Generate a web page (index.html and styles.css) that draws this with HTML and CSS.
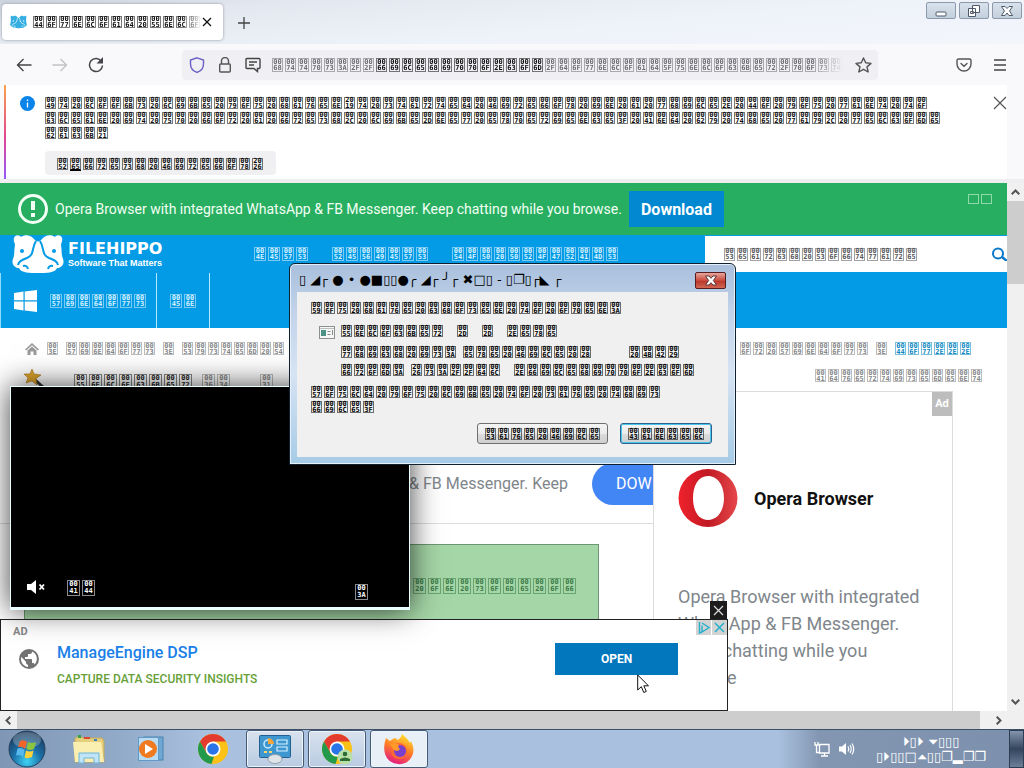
FILE: index.html
```html
<!DOCTYPE html>
<html lang="en">
<head>
<meta charset="utf-8">
<title>Download Unlocker</title>
<link rel="stylesheet" href="styles.css">
</head>
<body>
<svg width="0" height="0" class="defs" aria-hidden="true">
  <defs>
    <linearGradient id="flame" x1="0.7" y1="0" x2="0.3" y2="1"><stop offset="0" stop-color="#ffe22e"/><stop offset=".5" stop-color="#ff7a28"/><stop offset="1" stop-color="#e31587"/></linearGradient>
    <linearGradient id="operaRing" x1="0" y1="0" x2="1" y2="0"><stop offset="0" stop-color="#f0222c"/><stop offset=".5" stop-color="#c11a24"/><stop offset="1" stop-color="#e5484a"/></linearGradient>
    <radialGradient id="orb" cx=".5" cy=".85" r=".8"><stop offset="0" stop-color="#3fd3f5"/><stop offset=".5" stop-color="#1a6fa8"/><stop offset="1" stop-color="#1b3b5c"/></radialGradient>
    <symbol id="hippo" viewBox="0 0 52 38">
      <path fill="currentColor" d="M2 3C3-1 8 0 9 2C13-1 19 0 22 4C24 7 28 7 30 4C33 0 39-1 43 2C44 0 49-1 50 3C51 6 49 8 49 10C50 15 49 19 51 24C53 29 49 33 45 33C43 38 34 38 26 38C18 38 9 38 7 33C3 33-1 29 1 24C3 19 2 15 3 10C3 8 1 6 2 3Z"/>
      <path fill="none" stroke="var(--cut)" stroke-width="2" d="M24 6C19 14 23 19 15 23C10 25 7 26 6 30M28 6C33 14 29 19 37 23C42 25 45 26 46 30"/>
      <path fill="var(--cut)" d="M23 0H29L26 7Z"/>
      <circle cx="10" cy="16" r="2" fill="var(--cut)"/><circle cx="42" cy="16" r="2" fill="var(--cut)"/>
      <path fill="none" stroke="var(--cut)" stroke-width="2" d="M11 31Q15 30 16 34M41 31Q37 30 36 34"/>
    </symbol>
    <symbol id="chrome" viewBox="0 0 32 32">
      <circle cx="16" cy="16" r="15" fill="#fbc116"/>
      <path fill="#e33b2e" d="M3 8.500A15 15 0 0 1 29 8.500H16L9.500 20Z"/>
      <path fill="#229a4b" d="M3 8.500L9.500 20A7.500 7.500 0 0 0 17 23.500L14.500 31A15 15 0 0 1 3 8.500Z"/>
      <circle cx="16" cy="16" r="7.500" fill="#fff"/><circle cx="16" cy="16" r="5.800" fill="#2874e8"/>
    </symbol>
  </defs>
</svg>

<header class="tabstrip">
  <div class="tab">
    <svg class="fav" width="17" height="14"><use href="#hippo"/></svg>
    <span class="hex tab-title">Download Unlo</span>
    <button class="bare" aria-label="Close tab"><svg width="10" height="10" viewBox="0 0 10 10"><path d="M1 1L9 9M9 1L1 9" stroke="#111" stroke-width="1.300"/></svg></button>
  </div>
  <button class="bare newtab" aria-label="New tab"><svg width="12" height="12" viewBox="0 0 12 12"><path d="M6 0V12M0 6H12" stroke="#444" stroke-width="1.300"/></svg></button>
  <div class="winbtns">
    <button aria-label="Minimize"><svg width="14" height="12" viewBox="0 0 14 12"><rect x="2" y="7" width="10" height="4" rx="1" fill="#fff" stroke="#4e5a69"/></svg></button>
    <button aria-label="Restore"><svg width="14" height="12" viewBox="0 0 14 12"><path fill="#fff" stroke="#4e5a69" d="M5.500 .5H12.500V7.500H5.500ZM1.500 3.500H8.500V11.500H1.500ZM3.500 6.500H6.500V8.500H3.500Z"/></svg></button>
    <button aria-label="Close"><svg width="14" height="12" viewBox="0 0 14 12"><path fill="#fff" stroke="#4e5a69" d="M1.500 1.500H5L7 3.500L9 1.500H12.500L9.500 6L12.500 10.500H9L7 8L5 10.500H1.500L4.500 6Z"/></svg></button>
  </div>
</header>

<nav class="toolbar" aria-label="Navigation">
  <button class="bare" aria-label="Back"><svg width="16" height="16" viewBox="0 0 16 16"><path fill="none" stroke="#454549" stroke-width="1.400" d="M15.500 8H1.500M7.500 2L1.500 8L7.500 14"/></svg></button>
  <button class="bare" aria-label="Forward"><svg width="16" height="16" viewBox="0 0 16 16"><path fill="none" stroke="#c2c2c6" stroke-width="1.400" d="M.5 8H14.500M8.500 2L14.500 8L8.500 14"/></svg></button>
  <button class="bare" aria-label="Reload"><svg width="16" height="16" viewBox="0 0 16 16"><path fill="none" stroke="#454549" stroke-width="1.500" d="M13.500 4.500A6.500 6.500 0 1 0 14.500 8.500"/><path fill="#454549" d="M15 0V6.500H8.500Z"/></svg></button>
  <div class="urlbar">
    <svg width="16" height="16" viewBox="0 0 16 16"><path fill="none" stroke="#6a5fc4" stroke-width="1.400" d="M8 .8L14.500 3V7C14.500 11 12 14 8 15.400C4 14 1.500 11 1.500 7V3Z"/></svg>
    <svg width="16" height="16" viewBox="0 0 16 16"><path fill="none" stroke="#555" stroke-width="1.400" d="M4.500 7V4A3.500 3.500 0 0 1 11.500 4V7M3.700 7H12.300Q13.300 7 13.300 8V14Q13.300 15 12.300 15H3.700Q2.700 15 2.700 14V8Q2.700 7 3.700 7Z"/></svg>
    <svg width="16" height="16" viewBox="0 0 16 16"><path fill="none" stroke="#444" stroke-width="1.400" d="M2 1.500H14Q15 1.500 15 2.500V10.500Q15 11.500 14 11.500H12.500V14.500L9 11.500H2Q1 11.500 1 10.500V2.500Q1 1.500 2 1.500ZM4 5H12M4 8H9"/></svg>
    <div class="stack url">
      <div class="url-text"><span class="hex tall dim">https://</span><span class="hex tall">filehippo.com</span><span class="hex tall dim">/download_unlocker/post</span></div>
      <input type="text" aria-label="Address">
    </div>
    <button class="bare" aria-label="Bookmark"><svg width="17" height="16" viewBox="0 0 17 16"><path fill="none" stroke="#555" stroke-width="1.400" stroke-linejoin="round" d="M8.500 1L10.700 5.800L16 6.400L12 9.900L13.200 15L8.500 12.300L3.800 15L5 9.900L1 6.400L6.300 5.800Z"/></svg></button>
  </div>
  <button class="bare pocket" aria-label="Save to Pocket"><svg width="16" height="14" viewBox="0 0 16 14"><path fill="none" stroke="#555" stroke-width="1.400" stroke-linecap="round" d="M2.500 1H13.500Q15 1 15 2.500V6A7 7 0 0 1 1 6V2.500Q1 1 2.500 1ZM5 5.500L8 8.300L11 5.500"/></svg></button>
  <button class="bare" aria-label="Menu"><svg width="12" height="12" viewBox="0 0 12 12"><path stroke="#444" stroke-width="1.300" d="M0 1H12M0 6H12M0 11H12"/></svg></button>
</nav>

<section class="infobar">
  <svg width="15" height="15" viewBox="0 0 15 15"><circle cx="7.500" cy="7.500" r="7.500" fill="#0a84e8"/><path stroke="#fff" stroke-width="1.300" d="M7.500 6.500V11.500M7.500 3.500V5"/></svg>
  <div class="info-body">
    <p class="hex">It looks like you haven’t started Firefox in a while. Do you want to clean it up for a fresh, like-new experience? And by the way, welcome back!</p>
    <button class="refresh"><span class="hex" data-key="1">Refresh Firefox…</span></button>
  </div>
  <button class="bare" aria-label="Dismiss"><svg width="14" height="14" viewBox="0 0 14 14"><path d="M1 1L13 13M13 1L1 13" stroke="#555" stroke-width="1.200"/></svg></button>
</section>

<main class="viewport">
  <div class="page">
    <div class="alert">
      <svg width="30" height="30" viewBox="0 0 30 30"><circle cx="15" cy="15" r="13.500" fill="none" stroke="#f2fff4" stroke-width="3"/><path stroke="#f2fff4" stroke-width="4" d="M15 7V16M15 19V23"/></svg>
      <span>Opera Browser with integrated WhatsApp &amp; FB Messenger. Keep chatting while you browse.</span>
      <button class="download">Download</button>
      <span class="blank"><i></i><i></i></span>
    </div>

    <div class="masthead">
      <a class="logo" href="#"><svg width="52" height="38"><use href="#hippo"/></svg><span><b>FILEHIPPO</b><small>Software That Matters</small></span></a>
      <a href="#" class="hex tall wide">NEWS</a><a href="#" class="hex tall wide">REVIEWS</a><a href="#" class="hex tall wide">TOP PROGRAMS</a>
      <div class="search">
        <div class="stack"><span class="hex mid dim">Search Software</span><input type="text" aria-label="Search Software"></div>
        <button class="bare" aria-label="Search"><svg width="16" height="14" viewBox="0 0 16 14"><circle cx="7" cy="6.500" r="5" fill="none" stroke="#0878c9" stroke-width="2"/><path stroke="#0878c9" stroke-width="2.500" d="M11 10L16 14"/></svg></button>
      </div>
    </div>
    <div class="platform">
      <a href="#"><svg width="23" height="22" viewBox="0 0 23 22"><path fill="#fff" d="M0 3L9.500 1.600V10.300H0ZM10.700 1.400L23 0V10.300H10.700ZM0 11.500H9.500V20.400L0 19ZM10.700 11.500H23V22L10.700 20.500Z"/></svg><span class="hex tall wide">Windows</span></a>
      <a href="#"><span class="hex tall wide">En</span></a>
    </div>

    <nav class="crumbs" aria-label="Breadcrumb">
      <svg width="14" height="12" viewBox="0 0 14 12"><path fill="#999" d="M7 0L14 6.500L12.800 7.600L7 2.300L1.200 7.600L0 6.500ZM2.500 7.500L7 3.500L11.500 7.500V12H8.500V8.500H5.500V12H2.500Z"/></svg>
      <span class="hex mid">&gt;</span><a href="#" class="hex mid">Windows</a><span class="hex mid">&gt;</span><a href="#" class="hex mid">System T</a>
      <a href="#" class="hex mid push">or Windows</a><span class="hex mid">&gt;</span><span class="hex mid here">Dow...</span>
    </nav>

    <div class="columns">
      <div class="main">
        <h1><svg width="22" height="20" viewBox="0 0 22 20"><path stroke="#333" stroke-width="3" d="M9 9L20 19"/><path fill="#e0a52b" stroke="#a87416" stroke-width=".6" d="M8 0L10 5L17 6L12 9.500L13 16L8 12L2 14L4 9L0 5L6 5Z"/></svg><span class="hex big">Unlocker</span><span class="hex big light">64</span><span class="hex big light">1</span><span class="hex big light">9</span></h1>
        <div class="promo"><p>Opera Browser with integrated WhatsApp &amp; FB Messenger. Keep</p><button>DOW</button></div>
        <div class="notice"><span class="hex big"> on some of</span></div>
      </div>
      <aside class="side">
        <p class="hex mid">Advertisement</p>
        <div class="ad">
          <span class="adtag">Ad</span>
          <h2><svg width="60" height="60" viewBox="0 0 60 60"><path fill="url(#operaRing)" fill-rule="evenodd" d="M30 1A29.500 29 0 1 1 30 59A29.500 29 0 1 1 30 1ZM30 8C20 8 15 18 15 30C15 42 20 52 30 52C40 52 46 42 46 30C46 18 40 8 30 8Z"/></svg>Opera Browser</h2>
          <p>Opera Browser with integrated WhatsApp &amp; FB Messenger. Keep chatting while you browse</p>
        </div>
      </aside>
    </div>

    <div class="banner">
      <svg class="globe" width="20" height="20" viewBox="0 0 20 20"><circle cx="10" cy="10" r="10" fill="#737373"/><path fill="#fff" d="M9 18C5 17.500 2 14 2 10C2 9 2.200 8.500 2.400 8L7 12.800V13.800C7 15 8 15.800 9 15.800ZM15.800 15.400C15.500 14.600 14.800 14 14 14H13V11C13 10.400 12.500 10 12 10H6V8H8C8.500 8 9 7.600 9 7V5H11C12 5 13 4 13 3V2.600C18 4.500 19.500 11 15.800 15.400Z"/></svg>
      <div class="banner-text"><small>AD</small><a href="#" class="brand">ManageEngine DSP</a><a href="#" class="tag">CAPTURE DATA SECURITY INSIGHTS</a></div>
      <button class="open">OPEN</button>
      <div class="choices">
        <button aria-label="AdChoices"><svg width="13" height="13" viewBox="0 0 13 13"><path fill="none" stroke="#24b0cc" stroke-width="1.400" d="M5 2L12 6.500L5 11V4.500M2.500 1V12L5 11"/></svg></button>
        <button aria-label="Hide ad"><svg width="11" height="11" viewBox="0 0 11 11"><path stroke="#24b0cc" stroke-width="1.500" d="M1 1L10 10M10 1L1 10"/></svg></button>
      </div>
      <button class="closead" aria-label="Close ad"><svg width="11" height="11" viewBox="0 0 11 11"><path stroke="#ddd" stroke-width="1.200" d="M1 1L10 10M10 1L1 10"/></svg></button>
    </div>

    <div class="video">
      <svg width="20" height="16" viewBox="0 0 20 16"><path fill="#fff" d="M1 5H5L10 1V15L5 11H1Z"/><path stroke="#fff" stroke-width="1.800" d="M13.500 5.500L18 10.500M18 5.500L13.500 10.500"/></svg>
      <span class="hex big">AD</span><span class="hex big time">:</span>
    </div>
  </div>
  <div class="vbar"><svg width="9" height="6" viewBox="0 0 9 6"><path fill="none" stroke="#555" stroke-width="2" d="M.7 5.300L4.500 1.500L8.300 5.300"/></svg><i></i><svg width="9" height="6" viewBox="0 0 9 6"><path fill="none" stroke="#555" stroke-width="2" d="M.7 .7L4.500 4.500L8.300 .7"/></svg></div>
  <div class="hbar"><svg width="6" height="9" viewBox="0 0 6 9"><path fill="none" stroke="#555" stroke-width="2" d="M5.300 .7L1.500 4.500L5.300 8.300"/></svg><i></i><svg width="6" height="9" viewBox="0 0 6 9"><path fill="none" stroke="#555" stroke-width="2" d="M.7 .7L4.500 4.500L.7 8.300"/></svg></div>
</main>

<footer class="taskbar">
  <button class="orb" aria-label="Start"><svg width="38" height="38" viewBox="0 0 38 38"><circle cx="19" cy="19" r="18" fill="url(#orb)" stroke="#26425f"/><ellipse cx="19" cy="10" rx="14" ry="8" fill="#fff" opacity=".25"/><path fill="#f1652a" d="M12 11Q16 9 19 12L17 19Q14 16 10 17Z"/><path fill="#8cc63e" d="M20 12Q24 14 28 12L26 19Q22 21 18.500 19Z"/><path fill="#58b9ee" d="M9.500 18.500Q13 17 16.500 20L15 27Q12 24 8 25.500Z"/><path fill="#fcd13b" d="M18 20.500Q22 22.500 25.500 20.500L24 27Q20 29 16.500 27.500Z"/></svg></button>
  <button class="app" aria-label="Explorer"><svg width="34" height="32" viewBox="0 0 34 32"><path fill="#e6cf7c" stroke="#c0a95a" d="M3 5L8 3L11 5H30L32 8V29H3Z"/><path fill="#faefb0" d="M1 9H29L32 29H3Z"/><path fill="#35a34a" d="M6 2H9V5H6Z"/><path fill="#d9482f" d="M12 4H18V6H12Z"/><path fill="#3c82c9" d="M22 6H25V8H22Z"/><path fill="#bfe4f6" stroke="#6fb4da" d="M7 20H27V30H22V25H12V30H7Z"/></svg></button>
  <button class="app" aria-label="Media Player"><svg width="28" height="28" viewBox="0 0 28 28"><rect x="7" y="2" width="19" height="23" fill="#6fa8d4" stroke="#4d83b0"/><rect x="1.500" y="2.500" width="20" height="23" fill="#b9dcf2" stroke="#5f9ac8"/><circle cx="11" cy="14" r="9" fill="#f07a1f"/><path fill="#fff" d="M8 9L16 14L8 19Z"/></svg></button>
  <button class="app" aria-label="Chrome"><svg width="32" height="32"><use href="#chrome"/></svg></button>
  <button class="app running" aria-label="Control Panel"><svg width="32" height="30" viewBox="0 0 32 30"><rect x=".5" y="1.500" width="31" height="22" rx="1" fill="#3f97d0" stroke="#24608f"/><circle cx="9" cy="10" r="4" fill="none" stroke="#c8ecff" stroke-width="1.500"/><path fill="#f5a53a" d="M9 10V4A6 6 0 0 1 15 10Z"/><path fill="none" stroke="#d7f1ff" stroke-width="1.200" d="M18 6H28V10H18ZM18 13H28V17H18Z"/><path stroke="#ffd76a" stroke-width="2" d="M5 18H8M10 18H13"/><ellipse cx="16" cy="25" rx="7" ry="4.500" fill="#dfe4e8" stroke="#93a0ac"/></svg></button>
  <button class="app running" aria-label="Chrome profile"><svg width="32" height="32" viewBox="0 0 32 32"><use href="#chrome"/><circle cx="24" cy="24" r="7.500" fill="#b8dfa8"/><circle cx="24" cy="21" r="2.300" fill="#2c6b35"/><path fill="#2c6b35" d="M19 28V26Q24 23 29 26V28Z"/></svg></button>
  <button class="app running" aria-label="Firefox"><svg width="32" height="32" viewBox="0 0 32 32"><path fill="url(#flame)" d="M3 5L7 8Q10 5 13 5L14 7Q18 6 19 1Q25 6 27 10L28 8Q33 18 28 25Q23 32 15 31Q5 30 2 21Q0 13 3 5Z"/><circle cx="16" cy="18" r="8" fill="#ff6a32"/><circle cx="17" cy="18" r="6" fill="#7b3fd0"/><path fill="#ff9a2b" d="M7 11Q12 9 16 12Q14 14 17 16Q14 20 10 16Z"/></svg></button>
  <div class="tray">
    <svg width="16" height="15" viewBox="0 0 16 15"><path fill="none" stroke="#fff" stroke-width="1.300" d="M5.500 2.500H15V11H5.500ZM7 14H14M10.500 11V14M1 0V3H4V0M2.500 3V10.500H5"/></svg>
    <svg width="16" height="14" viewBox="0 0 16 14"><path fill="#fff" d="M0 4.500H3L7 1V13L3 9.500H0Z"/><path fill="none" stroke="#fff" stroke-width="1.200" d="M9 4.500Q10.500 7 9 9.500M11 3Q13.500 7 11 11M13 1.500Q16.500 7 13 12.500"/></svg>
    <div class="clock"><span>⏵▯⏵ ⏷▯▯▯</span><span>▯⏵▯▯□⏶▯▯❐▂❐❐</span></div>
    <button class="peek" aria-label="Show desktop"></button>
  </div>
</footer>

<section class="dialog" role="dialog" aria-label="Opening file">
  <div class="dlg-title"><span>▯ ◢┌ ● • ●■▯▯●╭ ◢┌ ╯┌ ✖□▯ - ▯❐▯┌◣ ┌</span><button aria-label="Close dialog"><svg width="14" height="11" viewBox="0 0 14 11"><path fill="#fff" stroke="#5d3a3c" d="M1.500 1H5L7 3.300L9 1H12.500L9.300 5.500L12.500 10H9L7 7.700L5 10H1.500L4.700 5.500Z"/></svg></button></div>
  <div class="dlg-body">
    <p class="hex">You have chosen to open:</p>
    <div class="details">
      <svg width="16" height="13" viewBox="0 0 16 13"><rect x=".5" y=".5" width="15" height="12" fill="#f6f6f6" stroke="#8b9091"/><path stroke="#b9bebf" d="M1 2.500H15"/><rect x="2" y="4" width="5" height="6" fill="#4c9186"/><path stroke="#888" d="M8.500 5.500H11.500M8.500 8.500H11.500M13.500 4V9"/></svg>
      <div class="line gaps"><span class="hex">Unlocker</span><span class="hex">-</span><span class="hex">-</span><span class="hex">.exe</span></div>
      <div class="line type"><span class="hex">which is:</span><span class="hex">exe File (</span><span class="hex size"> KB)</span></div>
      <div class="line from"><span class="hex">from:</span><span class="hex">…s://dl</span><span class="hex host">.filehippo.com</span></div>
    </div>
    <p class="hex">Would you like to save this file?</p>
    <div class="actions"><button><span class="hex">Save File</span></button><button class="default"><span class="hex">Cancel</span></button></div>
  </div>
</section>

<svg class="cursor" width="13" height="20" viewBox="0 0 13 20"><path fill="#fff" stroke="#111" d="M.7 1V16L4.300 12.700L6.800 18.500L9.300 17.400L6.800 11.800H11.500Z"/></svg>
<script src="glyphs.js"></script>
</body>
</html>
```
FILE: styles.css
```css
* { box-sizing: border-box; }
body { margin: 0; height: 100vh; display: flex; flex-direction: column; overflow: hidden; position: relative; font-family: Roboto, sans-serif; background: #f9f9fb; }
p, h1, h2 { margin: 0; }
svg { flex: none; display: block; }
a { text-decoration: none; color: inherit; }
button { font-family: inherit; cursor: pointer; }
.defs { position: absolute; }
.bare { border: 0; background: none; padding: 0; display: flex; align-items: center; justify-content: center; }

/* Missing-glyph boxes: each character is shown as its code point */
.hex { --w: 11px; --h: 12px; --f: 7px; --l: 6px; display: inline-flex; flex-wrap: wrap; row-gap: 3px; font-size: 6px; color: #0c0c0d; }
.hex.mid { --h: 13px; }
.hex.tall { --h: 14px; }
.hex.wide { --w: 12px; }
.hex.big { --w: 13px; --h: 16px; --l: 7px; }
p.hex { display: flex; }
.hex .word { display: flex; }
.hex .box { width: var(--w); height: var(--h); margin-right: 2px; border: 1px solid color-mix(in srgb, currentColor 55%, transparent); font: bold var(--f)/var(--l) "DejaVu Sans Mono", monospace; white-space: pre; display: flex; align-items: center; justify-content: center; }
.hex .key { border-bottom-color: #000; box-shadow: 0 1px #000; }
.hex .eol { visibility: hidden; }
.hex.dim { color: #6d6d73; }

.stack { display: grid; align-items: center; min-width: 0; }
.stack > * { grid-area: 1 / 1; }
.stack input { width: 100%; border: 0; background: transparent; outline: 0; }

.tabstrip { height: 44px; flex: none; display: flex; align-items: flex-start; padding: 2px; background: linear-gradient(175deg, #cbd3dd 0, #e3e8f0 20%, #eef2f9 60%, #f3f6fb 100%); }
.tab { width: 221px; height: 36px; margin-top: 2px; padding: 0 11px 0 8px; display: flex; align-items: center; background: #fff; border-radius: 4px; box-shadow: 0 0 3px #8d929c; }
.fav { color: #35aee2; --cut: #fff; margin-right: 6px; }
.tab-title { flex: 1; flex-wrap: nowrap; overflow: hidden; mask-image: linear-gradient(90deg, #000 88%, transparent); }
.newtab { margin: 15px; }
.winbtns { margin-left: auto; display: flex; gap: 3px; }
.winbtns button { width: 30px; height: 17px; padding: 0; display: flex; align-items: center; justify-content: center; border: 1px solid #8c9aac; border-radius: 2px; background: linear-gradient(#d9e2ec, #c3cfdc); }

.toolbar { height: 41px; flex: none; display: flex; align-items: center; padding: 0 6px; }
.toolbar > .bare { width: 36px; height: 32px; }
.urlbar { flex: 1; min-width: 0; height: 30px; margin: 0 68px; padding: 0 6px 0 7px; display: flex; align-items: center; gap: 12px; background: #f0f0f4; border-radius: 4px; }
.url { flex: 1; margin-left: -1px; overflow: hidden; mask-image: linear-gradient(90deg, #000 95%, transparent); }
.url-text { display: flex; width: 0; }
.url-text .hex { flex: none; flex-wrap: nowrap; }

.infobar { flex: none; display: flex; align-items: flex-start; margin: 0 17px 0 4px; padding: 11px 0 4px 14px; background: #fff; border-left: 2px solid; border-image: linear-gradient(#f9a54b, #e3458f 55%, #9059ff) 1; }
.infobar + .viewport { border-top: 4px solid #eeeef1; }
.info-body { flex: 1; margin: 1px 0 0 10px; }
.info-body p { max-width: 940px; }
.refresh { display: flex; margin-top: 12px; padding: 7px 11px 5px 12px; border: 0; border-radius: 4px; background: #f0f0f2; }

.viewport { flex: 1; min-height: 0; display: grid; grid-template: minmax(0, 1fr) 18px / minmax(0, 1fr) 17px; background: #f0f0f0; }
.page { position: relative; overflow: hidden; background: #fff; }
.vbar, .hbar { display: flex; align-items: center; gap: 6px; }
.vbar { flex-direction: column; padding: 6px 0; }
.vbar i { width: 17px; height: 83px; background: #cdcdcd; }
.vbar svg:last-child { margin-top: auto; }
.hbar { grid-column: 1 / -1; padding: 0 22px 0 5px; }
.hbar i { flex: 1; height: 18px; margin-right: 10px; background: #cdcdcd; }

.alert { display: flex; align-items: center; height: 52px; padding: 0 15px 0 18px; gap: 7px; background: #27ae60; color: #f2fff4; font-size: 14px; white-space: nowrap; }
.download { height: 36px; padding: 0 12px; border: 0; background: #0288d1; color: #fff; font-size: 16px; font-weight: 700; }
.blank { display: flex; gap: 2px; margin-left: auto; align-self: flex-start; padding-top: 11px; }
.blank i { width: 11px; height: 10px; border: 1px solid #8fd9ad; }

.masthead { display: flex; align-items: center; height: 38px; background: #039be5; padding-left: 12px; color: #fff; }
.masthead .hex, .platform .hex { color: #d8f1ff; }
.masthead > .hex { margin-right: 22px; flex: none; flex-wrap: nowrap; }
.logo { width: 242px; flex: none; display: flex; align-items: center; gap: 4px; --cut: #039be5; }
.logo span { display: flex; flex-direction: column; }
.logo b { font: bold 16px/18px "DejaVu Sans", sans-serif; }
.logo small { font: bold 9px/10px "Liberation Sans", sans-serif; }
.search { width: 302px; height: 36px; margin-left: auto; padding-left: 19px; display: flex; align-items: center; justify-content: space-between; background: #fff; }
.search .stack { flex: 1; }
.masthead .search .hex { color: #55565a; }
.platform { display: flex; height: 55px; background: #039be5; border-left: 1px solid #8fdcff; }
.platform a { display: flex; align-items: center; gap: 13px; padding: 0 8px 0 13px; border-right: 1px solid #b5e8ff; }
.platform a + a { padding-right: 11px; }

.crumbs { display: flex; align-items: center; gap: 6px; height: 41px; padding: 0 34px 0 25px; white-space: nowrap; }
.crumbs svg { margin-right: 2px; }
.crumbs .hex { color: #86878a; flex: none; flex-wrap: nowrap; }
.crumbs .push { margin-left: auto; }
.crumbs .hex.here { color: #0d87bf; }

.columns { display: flex; }
.main { flex: 1; min-width: 0; }
h1 { display: flex; align-items: center; gap: 0 8px; height: 20px; padding-left: 24px; }
h1 svg { margin-right: 20px; }
h1 .hex { color: #222; padding-top: 5px; }
h1 .light { color: #888; }
h1 .light + .light { margin-left: 20px; }
.promo { display: flex; justify-content: flex-end; align-items: center; gap: 24px; height: 80px; margin-top: 55px; border-bottom: 1px solid #ddd; overflow: hidden; }
.promo p { color: #80868b; font-size: 16px; white-space: nowrap; }
.promo button { flex: none; width: 61px; height: 42px; padding: 0 0 0 24px; overflow: hidden; border: 0; border-radius: 21px 0 0 21px; background: #4285f4; color: #fff; font-size: 16px; text-align: left; }
.notice { margin: 20px 54px 0 24px; height: 130px; padding: 33px 20px; display: flex; justify-content: flex-end; align-items: flex-start; background: #a5d6a7; border: 1px solid #6d9672; }
.notice .hex { color: #3b7a47; }
.side { width: 354px; }
.side > .hex { display: flex; justify-content: flex-end; padding: 0 23px 0 0; margin-bottom: 9px; color: #86878a; }
.ad { position: relative; width: 300px; height: 360px; padding: 76px 24px 0; border: 1px solid #dcdcdc; }
.adtag { position: absolute; top: 0; right: 0; width: 20px; height: 24px; background: #bdbdbd; color: #fff; font: bold 11px/24px Roboto, sans-serif; text-align: center; }
.ad h2 { display: flex; align-items: center; gap: 16px; font-size: 18px; font-weight: 700; color: #111; }
.ad p { margin-top: 55px; color: #80868b; font-size: 18px; line-height: 27px; }

.banner { position: absolute; left: 0; bottom: 0; width: 728px; height: 92px; display: flex; border: 1px solid #222; background: #fff; }
.globe { margin: 29px 18px 0 18px; }
.banner-text { display: flex; flex-direction: column; flex: 1; white-space: nowrap; }
.banner-text small { margin-left: -44px; font-size: 11px; line-height: 23px; font-weight: 700; color: #888; }
.brand { color: #1a80e8; font-size: 16px; line-height: 20px; font-weight: 500; }
.tag { color: #689f38; font-size: 12px; line-height: 32px; font-weight: 500; }
.open { align-self: flex-start; width: 123px; height: 32px; margin: 23px 18px 0 0; border: 0; background: #0277bd; color: #fff; font-size: 12px; font-weight: 700; }
.choices { display: flex; gap: 1px; }
.choices button { width: 15px; height: 15px; padding: 0; border: 0; background: #d3d3d3; display: flex; align-items: center; justify-content: center; }
.closead { position: absolute; right: 0; bottom: 91px; width: 17px; height: 18px; padding: 0; border: 0; background: #1c1c1c; display: flex; align-items: center; justify-content: center; }

.video { position: absolute; left: 10px; bottom: 101px; width: 400px; height: 224px; padding: 0 41px 7px 15px; display: flex; align-items: flex-end; gap: 21px; background: #000; border: solid #e9ffff; border-width: 1px 1px 3px; box-shadow: 0 0 28px rgba(0, 0, 0, .75); }
.video svg { margin-bottom: 5px; }
.video .hex { color: #fff; margin-bottom: 4px; }
.video .time { margin: 0 -2px 0 auto; }

.taskbar { height: 39px; flex: none; display: flex; align-items: center; gap: 4px; padding-left: 8px; border-top: 1px solid #3b5068; background: linear-gradient(90deg, #7f97b5 0, #92abc9 12%, #a9c1df 20%, #a9c1df 76%, #8396b1 80%, #7c90ad 100%); }
.orb, .app { border: 0; padding: 0; background: none; }
.orb { width: 38px; margin-right: 10px; }
.app { width: 58px; height: 38px; display: flex; align-items: center; justify-content: center; }
.running { border: 1px solid #465a75; border-radius: 3px; background: linear-gradient(#d9e2ee, #b9cbe2); box-shadow: inset 0 0 0 1px #eef4fb; }
.running:last-of-type { background: #e9eff7; }
.tray { margin-left: auto; display: flex; align-items: center; gap: 9px; align-self: stretch; color: #fff; }
.clock { margin: 0 14px 0 12px; display: flex; flex-direction: column; align-items: center; font: 13px/15px "DejaVu Sans", sans-serif; }
.peek { width: 15px; height: 38px; border: 1px solid #2d3d52; background: linear-gradient(#8295ad, #33465e 50%, #6b7f99); }

.dialog { position: absolute; left: 289px; top: 263px; width: 447px; padding: 0 7px 7px; border: 1px solid #10202e; border-radius: 6px 6px 0 0; background: linear-gradient(#a9bfdc 0, #c3d4ea 25%, #d6e3f3 55%, #a6cbe6 100%); box-shadow: inset 0 0 0 1px #e3f0fb; }
.dlg-title { height: 28px; display: flex; justify-content: space-between; align-items: center; padding: 4px 2px 0 2px; color: #000; font: 13px/14px "DejaVu Sans", sans-serif; white-space: pre; }
.dlg-title button { width: 31px; height: 17px; padding: 0; display: flex; align-items: center; justify-content: center; border: 1px solid #571b20; border-radius: 2px; background: linear-gradient(#e7a79c, #c94a3c 50%, #b8352a 51%, #d26552); }
.dlg-body { padding: 10px 16px 13px 14px; background: #f0f0f0; }
.dlg-body .hex { color: #000; }
.details { position: relative; padding: 11px 0 10px 30px; display: flex; flex-direction: column; }
.details > svg { position: absolute; left: 8px; top: 12px; }
.line { display: flex; }
.gaps { gap: 12px; }
.line.type { gap: 5px; margin: 9px 0 6px; }
.from { gap: 5px; }
.size { margin-left: 31px; }
.host { margin-left: 7px; }
.actions { display: flex; justify-content: flex-end; gap: 12px; margin-top: 10px; }
.actions button { height: 21px; padding: 0 5px 0 7px; display: flex; align-items: center; border: 1px solid #707070; border-radius: 3px; background: linear-gradient(#f4f4f4, #ebebeb 50%, #dcdcdc 51%, #cfcfcf); }
.actions .default { border-color: #2c628b; box-shadow: inset 0 0 0 1px #48c5ef; }

.cursor { position: absolute; left: 637px; top: 674px; }
```
FILE: glyphs.js
```js
// Shows every character of a .hex element as a box holding its four-digit code point.
document.querySelectorAll('.hex').forEach(function (el) {
  var text = el.textContent;
  var key = el.dataset.key;
  el.textContent = '';
  el.title = text;
  var word = null;
  Array.from(text).forEach(function (ch, i) {
    if (!word) {
      word = document.createElement('span');
      word.className = 'word';
      el.appendChild(word);
    }
    var code = ch.codePointAt(0).toString(16).toUpperCase().padStart(4, '0');
    var box = document.createElement('span');
    box.className = String(i) === key ? 'box key' : 'box';
    box.textContent = code.slice(0, 2) + '\n' + code.slice(2);
    word.appendChild(box);
    if (ch === ' ') word = null;
  });
});

// A space that ends a wrapped line takes no box.
document.querySelectorAll('.hex .word').forEach(function (word) {
  var next = word.nextElementSibling;
  if (next && next.offsetTop > word.offsetTop) word.lastElementChild.classList.add('eol');
});
```
